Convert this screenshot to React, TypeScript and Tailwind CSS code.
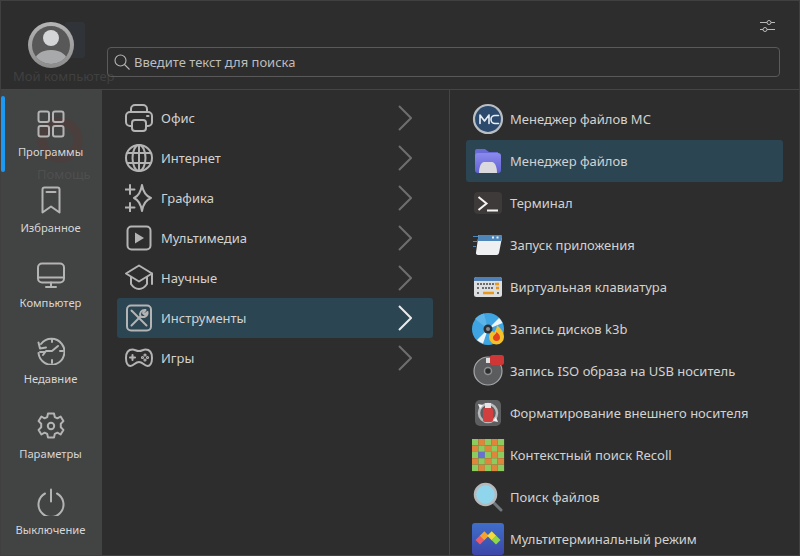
import React from "react";

const stroke = { fill: "none", stroke: "currentColor", strokeWidth: 2, strokeLinecap: "round" as const, strokeLinejoin: "round" as const };

const Ico = ({ children, className = "" }: { children: React.ReactNode; className?: string }) => (
  <svg viewBox="0 0 28 28" className={`w-7 h-7 shrink-0 ${className}`} {...stroke}>
    {children}
  </svg>
);

const navItems: { label: string; icon: React.ReactNode }[] = [
  {
    label: "Программы",
    icon: (
      <>
        <rect x="1.5" y="1.5" width="10.5" height="10.5" rx="2" />
        <rect x="16" y="1.5" width="10.5" height="10.5" rx="2" />
        <rect x="1.5" y="16" width="10.5" height="10.5" rx="2" />
        <rect x="16" y="16" width="10.5" height="10.5" rx="2" />
      </>
    ),
  },
  {
    label: "Избранное",
    icon: (
      <>
        <path d="M5.5 26.5V3.5a2 2 0 0 1 2-2h13a2 2 0 0 1 2 2v23L14 20.5z" />
        <path d="M9.5 6h9" />
      </>
    ),
  },
  {
    label: "Компьютер",
    icon: (
      <>
        <rect x="1" y="2.5" width="26" height="19" rx="4" />
        <path d="M1 16.5h26M14 21.5v4M9 26h10" />
      </>
    ),
  },
  {
    label: "Недавние",
    icon: (
      <>
        <path d="M4 7A13 13 0 1 1 1.5 16" />
        <path d="M1.5 5.5 3 11.5l6-1" />
        <path d="M3 15h5M15 2v3M15 23v3M23 14h3M15 14l6-5M15 14H9l-3 4" />
      </>
    ),
  },
  {
    label: "Параметры",
    icon: (
      <>
        <path d="M11 1.5h6l.8 3.6 2.6 1.2 3.2-1.8 2.8 4.6-2.6 2.6v3.6l2.6 2.6-2.8 4.6-3.2-1.8-2.6 1.2-.8 3.6h-6l-.8-3.6-2.6-1.2-3.2 1.8-2.8-4.6 2.6-2.6v-3.6L1.6 9.1l2.8-4.6 3.2 1.8 2.6-1.2z" />
        <circle cx="14" cy="14" r="3.2" />
      </>
    ),
  },
  {
    label: "Выключение",
    icon: (
      <>
        <path d="M14 1.5v12" />
        <path d="M8 5.5a12.5 12.5 0 1 0 12 0" />
      </>
    ),
  },
];

const categories: { label: string; icon: React.ReactNode; active?: boolean }[] = [
  {
    label: "Офис",
    icon: (
      <>
        <path d="M6 8V5a4 4 0 0 1 4-4h8a4 4 0 0 1 4 4v3" />
        <path d="M6.5 22H5a4 4 0 0 1-4-4v-6a4 4 0 0 1 4-4h18a4 4 0 0 1 4 4v6a4 4 0 0 1-4 4h-1.5" />
        <rect x="7" y="16" width="14" height="11" rx="3" />
        <path d="M22 12h1.5" />
      </>
    ),
  },
  {
    label: "Интернет",
    icon: (
      <>
        <circle cx="14" cy="14" r="13" />
        <ellipse cx="14" cy="14" rx="6.5" ry="13" />
        <path d="M14 1v26M2.5 9h23M2.5 19h23" />
      </>
    ),
  },
  {
    label: "Графика",
    icon: (
      <>
        <path d="M17 1c1 6 3.5 11 9 13-5.5 2-8 7-9 13-1-6-3.5-11-8-13 4.5-2 7-7 8-13z" />
        <path d="M5 1v9M.5 5.5h9M5 19v9M.5 23.5h9" />
      </>
    ),
  },
  {
    label: "Мультимедиа",
    icon: (
      <>
        <rect x="2.5" y="2.5" width="23" height="23" rx="4" />
        <path d="M10 8.5v11l9-5.5z" fill="currentColor" stroke="none" />
      </>
    ),
  },
  {
    label: "Научные",
    icon: (
      <>
        <path d="M1 9.5 14 1.5l13 8-13 8z" />
        <path d="M6 13v7c2 3 5 5 8 5s6-2 8-5v-7M27 9.5V20" />
      </>
    ),
  },
  {
    label: "Инструменты",
    active: true,
    icon: (
      <>
        <rect x="2" y="1.5" width="24" height="25" rx="4" />
        <path d="m6.5 6.5 15 15" />
        <path d="M6.5 21.5 15 13" />
        <path d="M15.5 12.5C14 9 16.5 5.5 20.5 6l-2.5 3 1.5 1.500L22.5 8c.5 4-3.500 6-7 4.500z" />
      </>
    ),
  },
  {
    label: "Игры",
    icon: (
      <>
        <path d="M7.500 5.500C10 5.500 11 7 14 7s4-1.500 6.500-1.500C25 5.500 27 9 27 14c0 5-2 8-4.500 8C19 22 18 18 14 18s-5 4-8.500 4C3 22 1 19 1 14 1 9 3 5.500 7.500 5.500z" />
        <path d="M7.500 11v5M5 13.500h5" />
        <circle cx="20" cy="11" r=".6" />
        <circle cx="20" cy="16" r=".6" />
        <circle cx="17.500" cy="13.500" r=".6" />
        <circle cx="22.500" cy="13.500" r=".6" />
      </>
    ),
  },
];

const IconSvg = ({ children }: { children: React.ReactNode }) => (
  <svg viewBox="0 0 32 32" className="w-8 h-8 shrink-0 overflow-visible">
    {children}
  </svg>
);

const apps: { label: string; icon: React.ReactNode; active?: boolean }[] = [
  {
    label: "Менеджер файлов MC",
    icon: (
      <>
        <circle cx="16" cy="16" r="14" fill="#2c4a6e" stroke="#b9bec2" strokeWidth="2.2" />
        <path d="M8 20.5V12l4.500 6 4.500-6v8.500" fill="none" stroke="#e8eef4" strokeWidth="1.6" strokeLinecap="round" strokeLinejoin="round" />
        <path d="M26.500 12.500H23a4 4 0 0 0 0 8h3.500" fill="none" stroke="#e8eef4" strokeWidth="1.6" strokeLinecap="round" />
      </>
    ),
  },
  {
    label: "Менеджер файлов",
    active: true,
    icon: (
      <>
        <defs>
          <linearGradient id="fold" x1="0" y1="0" x2="0" y2="1">
            <stop offset="0" stopColor="#8a8aee" />
            <stop offset="1" stopColor="#6263d2" />
          </linearGradient>
        </defs>
        <path d="M3 6a2 2 0 0 1 2-2h7c2 0 3 2 5 3h9v5H3z" fill="#6a6ad6" />
        <rect x="3" y="8" width="26" height="20" rx="3" fill="url(#fold)" />
        <path d="M7 28c0-6 2-11 5-11h8c3 0 5 5 5 11z" fill="#d9d9de" />
      </>
    ),
  },
  {
    label: "Терминал",
    icon: (
      <>
        <rect x="2" y="5" width="28" height="22" rx="4" fill="#3f3a3a" />
        <path d="m6.500 10 8 6.500-8 6.500" fill="none" stroke="#f4f4f4" strokeWidth="2" />
        <path d="M15 23.500h11" stroke="#f4f4f4" strokeWidth="2" />
      </>
    ),
  },
  {
    label: "Запуск приложения",
    icon: (
      <>
        <path d="M6.500 6h21.500a2 2 0 0 1 2 2.500L27 24a2.500 2.500 0 0 1-2.500 2H6a2 2 0 0 1-2-2.500z" fill="#eef0f2" />
        <path d="M6.500 6h21.500a2 2 0 0 1 2 2.500l-.7 3.500H5.500z" fill="#4f86ba" />
        <rect x="20" y="7.5" width="2" height="2" fill="#e6edf3" />
        <rect x="24.5" y="7.5" width="2" height="2" fill="#e6edf3" />
        <path d="M1 7.500h5M1 12.500h4M1 17.500h3" stroke="#4f86ba" strokeWidth="1.2" />
      </>
    ),
  },
  {
    label: "Виртуальная клавиатура",
    icon: (
      <>
        <rect x="2" y="6" width="28" height="20" rx="2.5" fill="#dcdee0" />
        <path d="M2 8.500A2.500 2.500 0 0 1 4.500 6h23A2.500 2.500 0 0 1 30 8.500V10H2z" fill="#4f7fb5" />
        <path d="M5 13h17M5 17h2M10 17h11M5 22h3M25 22h2" stroke="#6a6d70" strokeWidth="2" strokeDasharray="2 1" />
        <path d="M23 13h4M24 17h3M11 22h11" stroke="#e8961c" strokeWidth="2.3" />
      </>
    ),
  },
  {
    label: "Запись дисков k3b",
    icon: (
      <>
        <circle cx="16" cy="16" r="16" fill="#3fa5e2" />
        <path d="M16 16 5 27a16 16 0 0 0 6 3.500zM16 16l11-11a16 16 0 0 1 3.500 5z" fill="#f1f4f6" />
        <path d="M16 16 3 6a16 16 0 0 1 9-5.500z" fill="#5cb4e8" />
        <circle cx="16" cy="16" r="4.5" fill="#2c2f33" />
        <circle cx="16" cy="16" r="2" fill="#8a8d90" />
        <path d="M25 12c4 4 7 7 7 12a7.500 7.500 0 0 1-15 0c0-3 2-5 3-6 1 1 2 1 2 2 1-2 3-5 3-8z" fill="#f3c22b" />
        <path d="M24.500 19c2 2 3.500 3 3.500 5.500a3.500 3.500 0 0 1-7 0c0-2 3-3 3.500-5.500z" fill="#e2431e" />
      </>
    ),
  },
  {
    label: "Запись ISO образа на USB носитель",
    icon: (
      <>
        <circle cx="16" cy="16" r="14" fill="#5a5c5e" stroke="#a6a8aa" strokeWidth="1.2" />
        <circle cx="16" cy="16" r="3.5" fill="#2d2d2d" stroke="#8e9092" strokeWidth="1.5" />
        <rect x="14" y="3" width="5" height="5" fill="#dfe1e3" />
        <rect x="18" y="0" width="14" height="10" rx="2.5" fill="#cf3636" />
      </>
    ),
  },
  {
    label: "Форматирование внешнего носителя",
    icon: (
      <>
        <rect x="3" y="3" width="26" height="26" rx="5" fill="#5d5e60" />
        <circle cx="16" cy="16" r="9" fill="none" stroke="#b9bbbd" strokeWidth="2.5" />
        <rect x="13" y="6" width="6" height="5" fill="#e2e4e6" />
        <rect x="11" y="11" width="10" height="14" rx="2" fill="#d23f3f" />
        <path d="m6 7 5 1-3 4zM26 25l-5-1 3-4z" fill="#f2f2f2" />
      </>
    ),
  },
  {
    label: "Контекстный поиск Recoll",
    icon: (
      <>
        {Array.from({ length: 25 }).map((_, i) => {
          const x = i % 5;
          const y = Math.floor(i / 5);
          const fill = x === 1 && y === 2 ? "#6a6fd6" : (x + y) % 2 === 0 ? "#8ccb5e" : "#e0853c";
          return <rect key={i} x={x * 6.4} y={y * 6.4} width="6.5" height="6.5" fill={fill} />;
        })}
      </>
    ),
  },
  {
    label: "Поиск файлов",
    icon: (
      <>
        <path d="m20 20 9 9" stroke="#70777d" strokeWidth="3" strokeLinecap="round" />
        <circle cx="13.5" cy="13.5" r="10.5" fill="#8fd6ec" stroke="#b7babd" strokeWidth="2.5" />
      </>
    ),
  },
  {
    label: "Мультитерминальный режим",
    icon: (
      <>
        <defs>
          <linearGradient id="multi" x1="0" y1="0" x2="0" y2="1">
            <stop offset="0" stopColor="#3f6fc9" />
            <stop offset="1" stopColor="#3d46a8" />
          </linearGradient>
        </defs>
        <rect width="32" height="32" rx="3" fill="url(#multi)" />
        <path d="m3.500 17 4.500-4.500 4.500 4.500L8 21.500z" fill="#ee5a6a" />
        <path d="m7.800 12.700 4.500-4.500 4.500 4.500-4.500 4.500z" fill="#f4a32c" />
        <path d="m15.200 12.700 4.500-4.500 4.500 4.500-4.500 4.500z" fill="#f2dc3c" />
        <path d="m19.500 17 4.500-4.500 4.500 4.500-4.500 4.500z" fill="#8fd84a" />
      </>
    ),
  },
];

export default function App() {
  return (
    <div
      className="relative w-[800px] h-[556px] overflow-hidden bg-[#2d2d2d] border border-[#404040] text-[13px] text-[#d2d2d2] flex flex-col"
      style={{ fontFamily: '"Noto Sans", sans-serif' }}
    >
      {/* ghost desktop icons showing through the translucent menu */}
      <div className="absolute left-[12px] top-[66px] text-[#404040] whitespace-nowrap">Мой компьютер</div>
      <div className="absolute left-[64px] top-[21px] w-[20px] h-[36px] rounded-[3px] bg-[#303438]" />

      <header className="h-[89px] shrink-0 border-b border-[#454545] relative flex flex-col">
        <div className="flex justify-end pt-[18px] pr-[24px] h-[46px]">
          <svg viewBox="0 0 15 14" className="w-[15px] h-[14px] text-[#b9b9b9]" fill="none" stroke="currentColor" strokeWidth="1">
            <path d="M0 3.500h7M11 3.500h4M0 10.500h3M7 10.500h8" />
            <circle cx="9" cy="3.5" r="2" />
            <circle cx="5" cy="10.5" r="2" />
          </svg>
        </div>
        <div className="ml-[106px] mr-[19px] h-[30px] border border-[#5a5a5a] rounded-[4px] flex items-center pl-[6px]">
          <svg viewBox="0 0 16 16" className="w-4 h-4 text-[#b5b5b5]" fill="none" stroke="currentColor" strokeWidth="1.1">
            <circle cx="6.5" cy="6.5" r="5.5" />
            <path d="m10.500 10.500 5 5" />
          </svg>
          <span className="ml-[4px] pt-[1px] text-[#bdbdbd]">Введите текст для поиска</span>
        </div>
        <div className="absolute left-[27px] top-[21px] w-[46px] h-[46px] rounded-full bg-gradient-to-b from-[#b5b5b5] to-[#8c8c8c] flex items-center justify-center">
          <svg viewBox="0 0 38 38" className="w-[38px] h-[38px] rounded-full bg-[#585858]">
            <circle cx="19" cy="12" r="8" fill="#d4d5d7" />
            <path d="M2 38c0-9 7-14 17-14s17 5 17 14z" fill="#a8a9aa" />
          </svg>
        </div>
      </header>

      <div className="flex flex-1 min-h-0">
        <nav className="relative w-[101px] shrink-0 bg-[#424343] pt-[6px]">
          <div className="absolute left-[36px] top-[75px] text-[#4e4f4f]">Помощь</div>
          <svg viewBox="0 0 50 50" className="absolute left-[34px] top-[25px] w-[50px] h-[50px] opacity-40" fill="none" strokeWidth="9">
            <circle cx="25" cy="25" r="18" stroke="#5a3a38" />
          </svg>
          {navItems.map((item, i) => (
            <div key={item.label} className="relative h-[75.6px] flex flex-col items-center pt-[14px] pr-[2px] text-[#d6d6d6]">
              {i === 0 && <div className="absolute left-0 top-0 w-[4px] h-[76px] rounded-[2px] bg-[#1d99f3]" />}
              <Ico className="text-[#b4b4b4]">{item.icon}</Ico>
              <span className="mt-[6px] text-[11.2px] leading-[16px]">{item.label}</span>
            </div>
          ))}
        </nav>

        <section className="w-[348px] shrink-0 border-r border-[#444444] pt-[8px] pl-[15px] pr-[16px]">
          {categories.map((c) => (
            <div
              key={c.label}
              className={`h-[40px] flex items-center pl-[8px] pr-[21px] rounded-[3px] ${c.active ? "bg-[#2b4553]" : ""}`}
            >
              <Ico className="text-[#b4b4b4]">{c.icon}</Ico>
              <span className="ml-[8px] pt-[2px] flex-1">{c.label}</span>
              <svg viewBox="0 0 14 26" className={`w-[14px] h-[26px] ${c.active ? "text-[#eaeaea]" : "text-[#6e6e6e]"}`} fill="none" stroke="currentColor" strokeWidth="2">
                <path d="m1 1 12 12L1 25" />
              </svg>
            </div>
          ))}
        </section>

        <section className="flex-1 min-w-0 pt-[8px] pl-[16px] pr-[16px]">
          {apps.map((a) => (
            <div key={a.label} className={`h-[42px] flex items-center pl-[6px] rounded-[3px] ${a.active ? "bg-[#2b4553]" : ""}`}>
              <IconSvg>{a.icon}</IconSvg>
              <span className="ml-[6px] pt-[2px] whitespace-nowrap">{a.label}</span>
            </div>
          ))}
        </section>
      </div>
    </div>
  );
}
